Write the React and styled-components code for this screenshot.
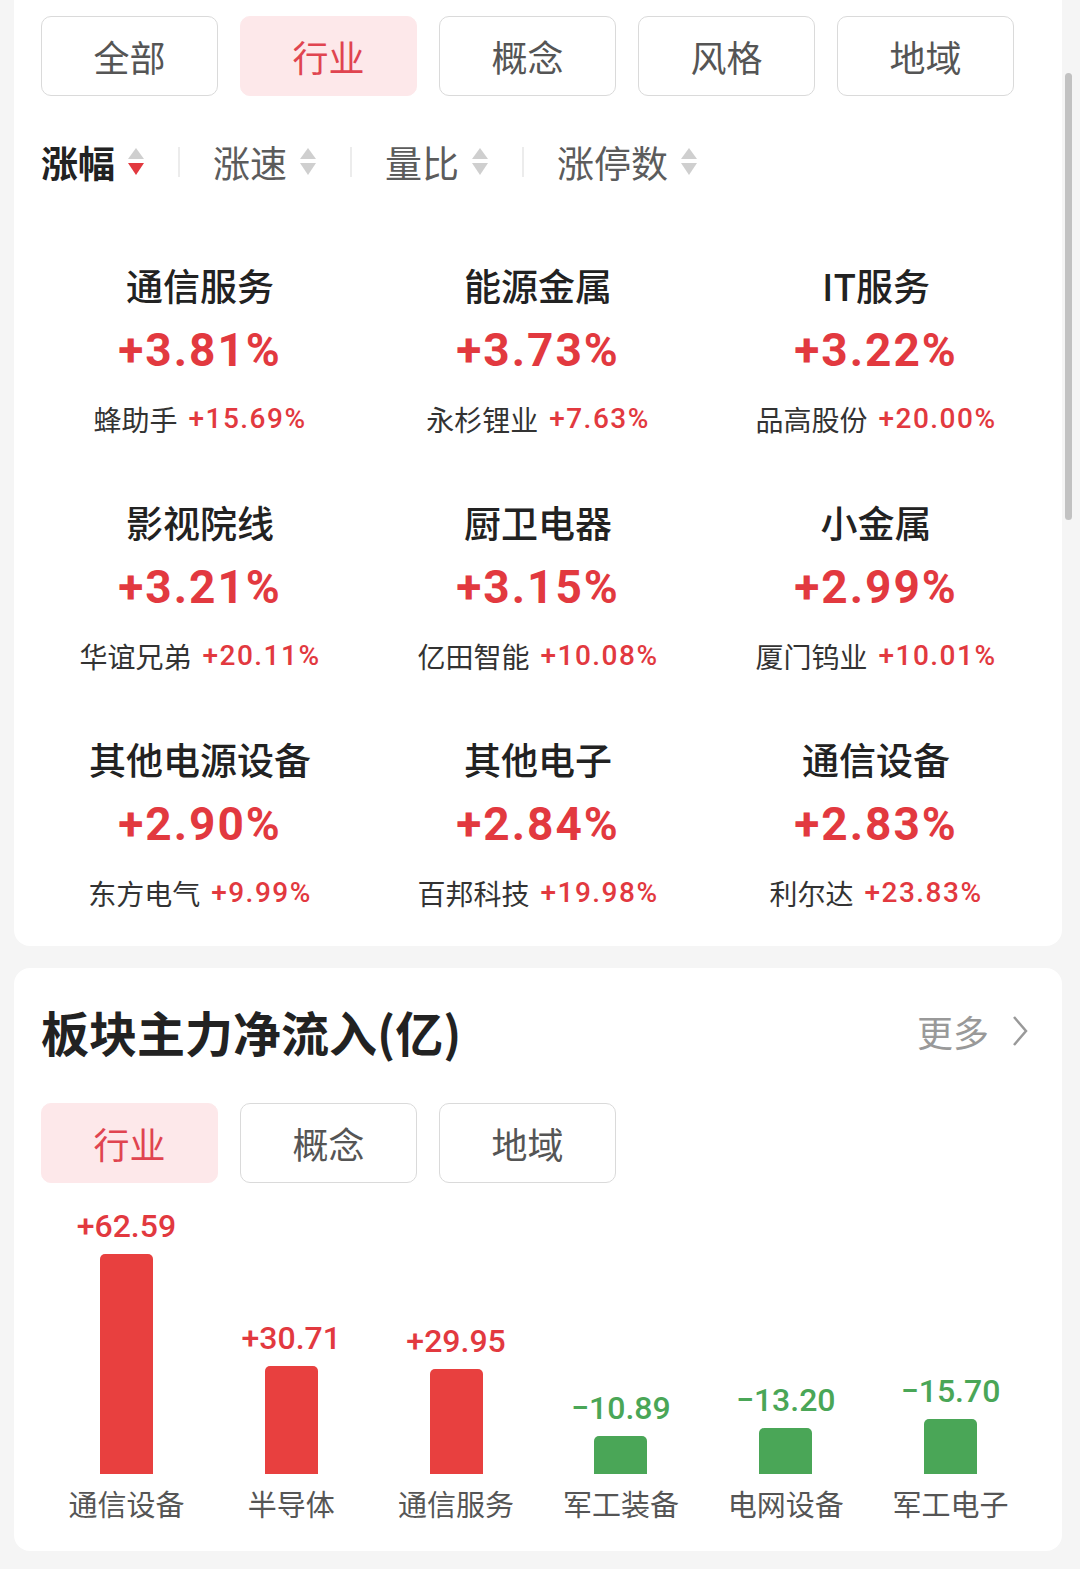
import React from 'react';
import styled, { createGlobalStyle } from 'styled-components';

const RED = '#e2393f';
const GREEN = '#4aa657';
const CJK = '"Noto Sans CJK SC", "Noto Sans", sans-serif';
const NUM = 'Roboto, "Noto Sans CJK SC", sans-serif';

const GlobalStyle = createGlobalStyle`
  html, body {
    margin: 0;
    padding: 0;
    background: #f5f5f5;
  }
  body {
    font-family: ${CJK};
  }
`;

// Page shell
const Page = styled.div`
  position: relative;
  width: 1080px;
  height: 1569px;
  box-sizing: border-box;
  padding: 0 18px 0 14px;
  background: #f5f5f5;
  overflow: hidden;
`;

const Card = styled.section`
  background: #fff;
  border-radius: ${(props) => (props.$flatTop ? '0 0 16px 16px' : '16px')};
  padding: ${(props) => props.$pad};
  margin-top: ${(props) => props.$gap || 0}px;
`;

const ScrollThumb = styled.div`
  position: absolute;
  left: 1065px;
  top: 73px;
  width: 7px;
  height: 447px;
  border-radius: 4px;
  background: #c2c2c2;
`;

// Segment tabs
const TabRow = styled.div`
  display: flex;
  gap: 22px;
`;

const Tab = styled.div`
  width: 177px;
  height: 80px;
  box-sizing: border-box;
  display: flex;
  align-items: center;
  justify-content: center;
  border-radius: 10px;
  border: 1.5px solid ${(props) => (props.$active ? '#fde8ea' : '#dadada')};
  background: ${(props) => (props.$active ? '#fde8ea' : '#fff')};
  color: ${(props) => (props.$active ? '#e04450' : '#555')};
  font-size: 36px;
`;

// Sort bar
const SortRow = styled.div`
  display: flex;
  align-items: center;
  gap: 33px;
  height: 44px;
  margin-top: 44px;
`;

const SortItem = styled.div`
  display: flex;
  align-items: center;
  gap: 12px;
  font-size: 37px;
  line-height: 44px;
  color: ${(props) => (props.$active ? '#222' : '#5c5c5c')};
  font-weight: ${(props) => (props.$active ? 700 : 400)};
`;

const Divider = styled.span`
  width: 2px;
  height: 30px;
  background: #ececec;
`;

// Industry grid
const Grid = styled.div`
  display: grid;
  grid-template-columns: repeat(3, 1fr);
  row-gap: 61px;
  margin: 79px -10px 0;
`;

const Cell = styled.div`
  display: flex;
  flex-direction: column;
  align-items: center;
`;

const CellName = styled.div`
  font-size: 37px;
  line-height: 44px;
  font-weight: 500;
  color: #222;
`;

const CellPct = styled.div`
  margin-top: 15px;
  font-family: ${NUM};
  font-size: 46px;
  line-height: 56px;
  font-weight: 700;
  letter-spacing: 2px;
  color: ${RED};
`;

const Leader = styled.div`
  margin-top: 21px;
  display: flex;
  align-items: center;
  gap: 11px;
  line-height: 40px;
  font-size: 28px;
  color: #333;
`;

const LeaderPct = styled.span`
  font-family: ${NUM};
  font-weight: 500;
  letter-spacing: 1.5px;
  color: ${RED};
`;

// Money flow card
const TitleRow = styled.div`
  display: flex;
  align-items: center;
  justify-content: space-between;
  height: 56px;
`;

const Title = styled.h2`
  margin: 0;
  font-size: 48px;
  font-weight: 700;
  color: #222;
`;

const More = styled.div`
  display: flex;
  align-items: center;
  gap: 22px;
  margin-right: 6px;
  font-size: 36px;
  color: #999;
`;

const TabRowSpaced = styled(TabRow)`
  margin-top: 44px;
`;

const Chart = styled.div`
  display: flex;
  height: 317px;
  margin-top: 23px;
  padding: 0 2px 0 3px;
`;

const BarCol = styled.div`
  flex: 1;
  display: flex;
  flex-direction: column;
  align-items: center;
  justify-content: flex-end;
`;

const BarValue = styled.div`
  margin-bottom: 8px;
  font-family: ${NUM};
  font-size: 32px;
  font-weight: 500;
  line-height: 40px;
  color: ${(props) => (props.$up ? RED : GREEN)};
`;

const Bar = styled.div`
  width: 53px;
  border-radius: 5px 5px 0 0;
  background: ${(props) => (props.$up ? '#e8403f' : GREEN)};
`;

const BarLabel = styled.div`
  margin-top: 9px;
  font-size: 29px;
  line-height: 40px;
  color: #555;
`;

const SortArrow = ({ dir }) => (
  <svg width="18" height="28" viewBox="0 0 18 28">
    <polygon points="9,0 17,11 1,11" fill={dir === 'up' ? '#e2393f' : '#cfcfcf'} />
    <polygon points="1,15 17,15 9,27" fill={dir === 'down' ? '#e2393f' : '#cfcfcf'} />
  </svg>
);

const Chevron = () => (
  <svg width="18" height="32" viewBox="0 0 18 32">
    <path d="M3 2 L15 16 L3 30" fill="none" stroke="#999" strokeWidth="2.5" />
  </svg>
);

const topTabs = ['全部', '行业', '概念', '风格', '地域'];
const sorts = ['涨幅', '涨速', '量比', '涨停数'];

const sectors = [
  { name: '通信服务', pct: '+3.81%', stock: '蜂助手', stockPct: '+15.69%' },
  { name: '能源金属', pct: '+3.73%', stock: '永杉锂业', stockPct: '+7.63%' },
  { name: 'IT服务', pct: '+3.22%', stock: '品高股份', stockPct: '+20.00%' },
  { name: '影视院线', pct: '+3.21%', stock: '华谊兄弟', stockPct: '+20.11%' },
  { name: '厨卫电器', pct: '+3.15%', stock: '亿田智能', stockPct: '+10.08%' },
  { name: '小金属', pct: '+2.99%', stock: '厦门钨业', stockPct: '+10.01%' },
  { name: '其他电源设备', pct: '+2.90%', stock: '东方电气', stockPct: '+9.99%' },
  { name: '其他电子', pct: '+2.84%', stock: '百邦科技', stockPct: '+19.98%' },
  { name: '通信设备', pct: '+2.83%', stock: '利尔达', stockPct: '+23.83%' },
];

const flows = [
  { name: '通信设备', value: 62.59 },
  { name: '半导体', value: 30.71 },
  { name: '通信服务', value: 29.95 },
  { name: '军工装备', value: -10.89 },
  { name: '电网设备', value: -13.2 },
  { name: '军工电子', value: -15.7 },
];

const PX_PER_YI = 3.515;

const formatFlow = (v) => (v > 0 ? `+${v.toFixed(2)}` : `\u2212${Math.abs(v).toFixed(2)}`);

const App = () => {
  return (
    <Page>
      <GlobalStyle />
      <Card $flatTop $pad="16px 27px 33px">
        <TabRow>
          {topTabs.map((t) => (
            <Tab key={t} $active={t === '行业'}>{t}</Tab>
          ))}
        </TabRow>
        <SortRow>
          {sorts.map((s, i) => (
            <React.Fragment key={s}>
              {i > 0 && <Divider />}
              <SortItem $active={i === 0}>
                {s}
                <SortArrow dir={i === 0 ? 'down' : null} />
              </SortItem>
            </React.Fragment>
          ))}
        </SortRow>
        <Grid>
          {sectors.map((s) => (
            <Cell key={s.name}>
              <CellName>{s.name}</CellName>
              <CellPct>{s.pct}</CellPct>
              <Leader>
                {s.stock}
                <LeaderPct>{s.stockPct}</LeaderPct>
              </Leader>
            </Cell>
          ))}
        </Grid>
      </Card>

      <Card $gap={22} $pad="35px 27px 28px">
        <TitleRow>
          <Title>板块主力净流入(亿)</Title>
          <More>
            更多
            <Chevron />
          </More>
        </TitleRow>
        <TabRowSpaced>
          <Tab $active>行业</Tab>
          <Tab>概念</Tab>
          <Tab>地域</Tab>
        </TabRowSpaced>
        <Chart>
          {flows.map((f) => (
            <BarCol key={f.name}>
              <BarValue $up={f.value > 0}>{formatFlow(f.value)}</BarValue>
              <Bar $up={f.value > 0} style={{ height: Math.round(Math.abs(f.value) * PX_PER_YI) }} />
              <BarLabel>{f.name}</BarLabel>
            </BarCol>
          ))}
        </Chart>
      </Card>

      <ScrollThumb />
    </Page>
  );
};

export default App;
